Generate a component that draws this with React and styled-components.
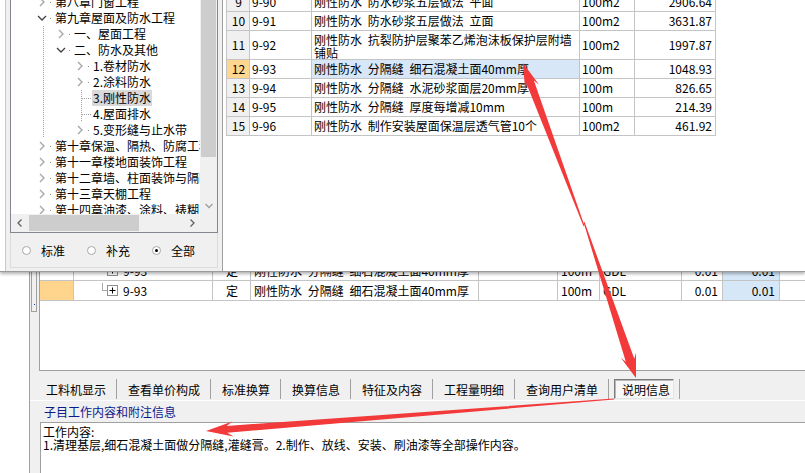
import React from "react";
import styled, { createGlobalStyle } from "styled-components";

const GlobalStyle = createGlobalStyle`
  html, body { margin: 0; padding: 0; background: #fff; }
  body {
    font-family: "Noto Sans CJK SC", "Liberation Sans", sans-serif;
    font-size: 12px;
    color: #000;
  }
`;

const treeItems = [
  { level: 0, label: "第八章门窗工程", state: "closed" },
  { level: 0, label: "第九章屋面及防水工程", state: "open" },
  { level: 1, label: "一、屋面工程", state: "closed", guides: [32] },
  { level: 1, label: "二、防水及其他", state: "open", guides: [32] },
  { level: 2, label: "1.卷材防水", state: "closed", guides: [32] },
  { level: 2, label: "2.涂料防水", state: "closed", guides: [32] },
  { level: 2, label: "3.刚性防水", state: "leaf", selected: true, guides: [32, 70] },
  { level: 2, label: "4.屋面排水", state: "leaf", guides: [32, 70] },
  { level: 2, label: "5.变形缝与止水带", state: "closed", guides: [32] },
  { level: 0, label: "第十章保温、隔热、防腐工程", state: "closed" },
  { level: 0, label: "第十一章楼地面装饰工程", state: "closed" },
  { level: 0, label: "第十二章墙、柱面装饰与隔断、幕墙工程", state: "closed" },
  { level: 0, label: "第十三章天棚工程", state: "closed" },
  { level: 0, label: "第十四章油漆、涂料、裱糊工程", state: "closed" },
];

const quotaRows = [
  { no: 9, code: "9-90", name: "刚性防水 防水砂浆五层做法 平面", unit: "100m2", price: "2906.64" },
  { no: 10, code: "9-91", name: "刚性防水 防水砂浆五层做法 立面", unit: "100m2", price: "3631.87" },
  { no: 11, code: "9-92", name: ["刚性防水 抗裂防护层聚苯乙烯泡沫板保护层附墙", "铺贴"], unit: "100m2", price: "1997.87", tall: true },
  { no: 12, code: "9-93", name: "刚性防水 分隔缝 细石混凝土面40mm厚", unit: "100m", price: "1048.93", current: true },
  { no: 13, code: "9-94", name: "刚性防水 分隔缝 水泥砂浆面层20mm厚", unit: "100m", price: "826.65" },
  { no: 14, code: "9-95", name: "刚性防水 分隔缝 厚度每增减10mm", unit: "100m", price: "214.39" },
  { no: 15, code: "9-96", name: "刚性防水 制作安装屋面保温层透气管10个", unit: "100m2", price: "461.92" },
];

const tabs = ["工料机显示", "查看单价构成", "标准换算", "换算信息", "特征及内容", "工程量明细", "查询用户清单", "说明信息"];

/* ---------- page frame ---------- */

const Screen = styled.div`
  position: relative;
  width: 805px;
  height: 473px;
  overflow: hidden;
  display: flex;
  background: #fff;
  & * { box-sizing: border-box; }
`;

const Gutter = styled.div`
  width: 30px;
  flex: none;
  background: #fff;
  border-right: 1px solid #a0a0a0;
`;

const Main = styled.div`
  flex: 1;
  min-width: 0;
  display: flex;
  flex-direction: column;
  background: #f0f0f0;
`;

const Work = styled.div`
  height: 371px;
  flex: none;
  display: flex;
`;

const Splitter = styled.div`
  width: 9px;
  flex: none;
  padding: 250px 2px 0 1px;
`;

const SplitThumb = styled.div`
  height: 62px;
  border: 1px solid #a0a0a0;
  border-top: none;
  display: flex;
  align-items: flex-end;
  justify-content: center;
  padding-bottom: 6px;
`;

const BlueDot = styled.span`
  width: 1px;
  height: 1px;
  background: #2040c0;
`;

/* ---------- main grid ---------- */

const Grid = styled.div`
  flex: 1;
  min-width: 0;
  background: #fff;
  border-left: 1px solid #a0a0a0;
  border-bottom: 1px solid #a0a0a0;
  padding-top: 261px;
`;

const GRow = styled.div`
  display: grid;
  grid-template-columns: 34px 139px 38px 228px 79px 42px 82px 41px 57px 1fr;
  height: 20px;
`;

const GCell = styled.div`
  display: flex;
  align-items: center;
  justify-content: ${(p) => (p.$align === "right" ? "flex-end" : p.$align === "center" ? "center" : "flex-start")};
  padding: 0 ${(p) => (p.$align === "right" ? "4px" : "2px")} 0 ${(p) => (p.$indent ? p.$indent : 3)}px;
  border-right: ${(p) => (p.$last ? "none" : "1px solid #c4c4c4")};
  border-bottom: 1px solid #c4c4c4;
  background: ${(p) => p.$bg || "#fff"};
  white-space: nowrap;
  overflow: hidden;
  word-spacing: 3px;
`;

const Elbow = styled.span`
  align-self: flex-start;
  margin-top: 2px;
  width: 5px;
  height: 8px;
  flex: none;
  border-left: 1px solid #a8a8a8;
  border-bottom: 1px solid #a8a8a8;
`;

const ExpandBox = styled.span`
  width: 11px;
  height: 11px;
  flex: none;
  border: 1px solid #8f8f8f;
  background: #fff;
  display: flex;
  align-items: center;
  justify-content: center;
  margin-right: 5px;
`;

/* ---------- bottom tabs + detail ---------- */

const TabBar = styled.div`
  height: 29px;
  flex: none;
  display: flex;
  align-items: flex-start;
  padding: 8px 0 0 5px;
`;

const Tab = styled.div`
  height: 20px;
  display: flex;
  align-items: center;
  padding: ${(p) => (p.$active ? "0 5px" : "1px 10px 0 11px")};
  border-right: 1px solid #a0a0a0;
  white-space: nowrap;
`;

const ActiveLabel = styled.span`
  height: 20px;
  display: flex;
  align-items: center;
  padding: 1px 3px 0 7px;
  border: 1px solid;
  border-color: #7a7a7a #e4e4e4 #e4e4e4 #7a7a7a;
  box-shadow: inset 1px 1px 0 #b8b8b8;
  background: #f7f7f7;
`;

const DetailHeader = styled.div`
  height: 22px;
  flex: none;
  border-top: 1px solid #fff;
  display: flex;
  align-items: center;
  padding-left: 14px;
  color: #0a1a8c;
`;

const TextBox = styled.div`
  flex: 1;
  margin-left: 10px;
  background: #fff;
  border-top: 1px solid #a0a0a0;
  border-left: 1px solid #a0a0a0;
  padding: 2px 2px 0 2px;
  line-height: 13px;
`;

/* ---------- popup (quota selector) ---------- */

const Popup = styled.div`
  position: absolute;
  top: 0;
  left: 0;
  z-index: 1;
  width: 805px;
  height: 272px;
  display: flex;
  background: #fff;
  border-bottom: 1px solid #9a9a9a;
  box-shadow: 0 2px 3px rgba(0, 0, 0, 0.3);
`;

const LeftPane = styled.div`
  margin-left: 5px;
  width: 217px;
  flex: none;
  display: flex;
  flex-direction: column;
  background: #f0f0f0;
  border-left: 1px solid #c8c8c8;
  padding: 0 4px 3px;
`;

const TreeBox = styled.div`
  height: 233px;
  flex: none;
  display: grid;
  grid-template-columns: 1fr 17px;
  grid-template-rows: 1fr 18px;
  background: #fff;
  border: 1px solid #828790;
  border-top: none;
`;

const TreeList = styled.div`
  overflow: hidden;
  min-width: 0;
`;

const TreeScroll = styled.div`
  margin-top: -6px;
`;

const guideBg = (xs) =>
  xs.length
    ? xs.map((x) => `linear-gradient(to bottom, #a0a0a0 50%, transparent 50%) ${x}px 0 / 1px 2px repeat-y`).join(", ")
    : "none";

const TreeRow = styled.div`
  height: 16px;
  display: flex;
  align-items: center;
  white-space: nowrap;
  padding-left: ${(p) => 25 + p.$level * 19}px;
  background: ${(p) => guideBg(p.$guides || [])};
`;

const Twisty = styled.span`
  width: 12px;
  height: 16px;
  flex: none;
  display: flex;
  align-items: center;
  justify-content: center;
  background: #fff;
`;

const Conn = styled.span`
  width: 7px;
  height: 16px;
  flex: none;
  background: linear-gradient(#909090, #909090) 2px 8px / 1px 1px no-repeat;
`;

const LeafStub = styled.span`
  width: 19px;
  height: 16px;
  flex: none;
  padding: 0 1px 0 8px;
  background-image: linear-gradient(to right, #a0a0a0 50%, transparent 50%);
  background-size: 2px 1px;
  background-repeat: repeat-x;
  background-position: 0 8px;
  background-origin: content-box;
  background-clip: content-box;
`;

const TreeLabel = styled.span`
  padding: 0 1px;
  margin-left: -1px;
  line-height: 16px;
  background: ${(p) => (p.$selected ? "#d9d9d9" : "transparent")};
`;

const VScroll = styled.div`
  display: flex;
  flex-direction: column;
  background: #f0f0f0;
`;

const VThumb = styled.div`
  height: 157px;
  margin: 0 1px;
  background: #cdcdcd;
`;

const Spacer = styled.div`
  flex: 1;
`;

const ScrollBtn = styled.div`
  width: 17px;
  height: ${(p) => (p.$h ? p.$h : 17)}px;
  flex: none;
  display: flex;
  align-items: center;
  justify-content: center;
`;

const HScroll = styled.div`
  display: flex;
  background: #f0f0f0;
`;

const HThumb = styled.div`
  width: 110px;
  margin: 1px;
  background: #cdcdcd;
`;

const Corner = styled.div`
  background: #f0f0f0;
`;

const RadioRow = styled.div`
  flex: 1;
  display: flex;
  align-items: center;
  padding-left: 11px;
  border: 1px solid #dcdcdc;
  border-top: none;
`;

const Radio = styled.label`
  display: flex;
  align-items: center;
  margin-right: 22px;
`;

const RadioDot = styled.span`
  width: 9px;
  height: 9px;
  border-radius: 50%;
  border: 1px solid #a8a8a8;
  background: #fff;
  margin-right: 10px;
  display: flex;
  align-items: center;
  justify-content: center;
  &::after {
    content: "";
    width: 3px;
    height: 3px;
    border-radius: 50%;
    background: ${(p) => (p.$on ? "#000" : "transparent")};
  }
`;

const RightPane = styled.div`
  flex: 1;
  min-width: 0;
  overflow: hidden;
  background: #fff;
  border-left: 1px solid #a0a0a0;
  padding-left: 3px;
`;

const QuotaTable = styled.div`
  margin-top: -7px;
  width: max-content;
  border-left: 1px solid #c4c4c4;
`;

const QRow = styled.div`
  display: grid;
  grid-template-columns: 23px 62px 268px 55px 81px;
  height: ${(p) => (p.$tall ? 29 : 19)}px;
`;

const QCell = styled.div`
  display: flex;
  align-items: center;
  justify-content: ${(p) => (p.$align === "right" ? "flex-end" : p.$align === "center" ? "center" : "flex-start")};
  padding: 0 ${(p) => (p.$align === "right" ? "3px" : "1px")} 0 2px;
  border-right: 1px solid #c4c4c4;
  border-bottom: 1px solid #c4c4c4;
  background: ${(p) => p.$bg || "#fff"};
  white-space: nowrap;
  overflow: hidden;
  word-spacing: 3px;
  line-height: 12px;
`;

const NameLines = styled.span`
  display: flex;
  flex-direction: column;
  padding-top: 1px;
  line-height: 13px;
`;

/* ---------- annotation arrows ---------- */

const Overlay = styled.svg`
  position: absolute;
  top: 0;
  left: 0;
  z-index: 2;
  pointer-events: none;
`;

function arrow(tail, tip, head, headW, w0, w1) {
  const dx = tip[0] - tail[0];
  const dy = tip[1] - tail[1];
  const len = Math.hypot(dx, dy);
  const ux = dx / len;
  const uy = dy / len;
  const nx = -uy;
  const ny = ux;
  const wing = [tip[0] - ux * head, tip[1] - uy * head];
  const join = [tip[0] - ux * head * 0.78, tip[1] - uy * head * 0.78];
  const pts = [
    [tail[0] + nx * w0, tail[1] + ny * w0],
    [join[0] + nx * w1, join[1] + ny * w1],
    [wing[0] + nx * headW, wing[1] + ny * headW],
    tip,
    [wing[0] - nx * headW, wing[1] - ny * headW],
    [join[0] - nx * w1, join[1] - ny * w1],
    [tail[0] - nx * w0, tail[1] - ny * w0],
  ];
  return pts.map((p) => p.map((v) => v.toFixed(1)).join(",")).join(" ");
}

const Chevron = ({ open }) =>
  open ? (
    <svg width="12" height="12" viewBox="0 0 12 12">
      <path d="M2 4 L6 8 L10 4" fill="none" stroke="#404040" strokeWidth="1.3" />
    </svg>
  ) : (
    <svg width="12" height="12" viewBox="0 0 12 12">
      <path d="M4 2 L8 6 L4 10" fill="none" stroke="#a8a8a8" strokeWidth="1.4" />
    </svg>
  );

const SmallArrow = ({ dir }) => {
  const d = {
    down: "M1.5 3 L5 6.5 L8.5 3",
    left: "M6.5 1.5 L3 5 L6.5 8.5",
    right: "M3.5 1.5 L7 5 L3.5 8.5",
  }[dir];
  return (
    <svg width="10" height="10" viewBox="0 0 10 10">
      <path d={d} fill="none" stroke={dir === "down" ? "#a0a0a0" : "#606060"} strokeWidth="1.3" />
    </svg>
  );
};

const PlusIcon = () => (
  <svg width="9" height="9" viewBox="0 0 9 9">
    <path d="M1.5 4.5H7.5M4.5 1.5V7.5" stroke="#000" strokeWidth="1" />
  </svg>
);

const MainGridRow = ({ marker }) => (
  <GRow>
    <GCell $bg={marker ? "#ffd48c" : "#fff"} />
    <GCell $indent={28}>
      <Elbow />
      <ExpandBox>
        <PlusIcon />
      </ExpandBox>
      9-93
    </GCell>
    <GCell $align="center">定</GCell>
    <GCell>刚性防水 分隔缝 细石混凝土面40mm厚</GCell>
    <GCell />
    <GCell>100m</GCell>
    <GCell>GDL</GCell>
    <GCell $align="right">0.01</GCell>
    <GCell $align="right" $bg="#d6e8f8">0.01</GCell>
    <GCell $last />
  </GRow>
);

export default function App() {
  return (
    <>
      <GlobalStyle />
      <Screen>
        <Gutter />
        <Main>
          <Work>
            <Splitter>
              <SplitThumb>
                <BlueDot />
              </SplitThumb>
            </Splitter>
            <Grid>
              <MainGridRow />
              <MainGridRow marker />
            </Grid>
          </Work>
          <TabBar>
            {tabs.map((t, i) =>
              i === tabs.length - 1 ? (
                <Tab key={t} $active>
                  <ActiveLabel>{t}</ActiveLabel>
                </Tab>
              ) : (
                <Tab key={t}>{t}</Tab>
              )
            )}
          </TabBar>
          <DetailHeader>子目工作内容和附注信息</DetailHeader>
          <TextBox>
            <div>工作内容:</div>
            <div>1.清理基层,细石混凝土面做分隔缝,灌缝膏。2.制作、放线、安装、刷油漆等全部操作内容。</div>
          </TextBox>
        </Main>

        <Popup>
          <LeftPane>
            <TreeBox>
              <TreeList>
                <TreeScroll>
                  {treeItems.map((it) => (
                    <TreeRow key={it.label} $level={it.level} $guides={it.guides}>
                      {it.state === "leaf" ? (
                        <LeafStub />
                      ) : (
                        <>
                          <Twisty>
                            <Chevron open={it.state === "open"} />
                          </Twisty>
                          <Conn />
                        </>
                      )}
                      <TreeLabel $selected={it.selected}>{it.label}</TreeLabel>
                    </TreeRow>
                  ))}
                </TreeScroll>
              </TreeList>
              <VScroll>
                <VThumb />
                <Spacer />
                <ScrollBtn>
                  <SmallArrow dir="down" />
                </ScrollBtn>
              </VScroll>
              <HScroll>
                <ScrollBtn $h={18}>
                  <SmallArrow dir="left" />
                </ScrollBtn>
                <HThumb />
                <Spacer />
                <ScrollBtn $h={18}>
                  <SmallArrow dir="right" />
                </ScrollBtn>
              </HScroll>
              <Corner />
            </TreeBox>
            <RadioRow>
              <Radio>
                <RadioDot />
                标准
              </Radio>
              <Radio>
                <RadioDot />
                补充
              </Radio>
              <Radio>
                <RadioDot $on />
                全部
              </Radio>
            </RadioRow>
          </LeftPane>

          <RightPane>
            <QuotaTable>
              {quotaRows.map((r) => (
                <QRow key={r.no} $tall={r.tall}>
                  <QCell $align="center" $bg={r.current ? "#ffd68f" : "#f0f0f0"}>
                    {r.no}
                  </QCell>
                  <QCell>{r.code}</QCell>
                  <QCell $bg={r.current ? "#d7e7f8" : "#fff"}>
                    {Array.isArray(r.name) ? (
                      <NameLines>
                        {r.name.map((l) => (
                          <span key={l}>{l}</span>
                        ))}
                      </NameLines>
                    ) : (
                      r.name
                    )}
                  </QCell>
                  <QCell>{r.unit}</QCell>
                  <QCell $align="right">{r.price}</QCell>
                </QRow>
              ))}
            </QuotaTable>
          </RightPane>
        </Popup>

        <Overlay width="805" height="473" viewBox="0 0 805 473">
          <polygon points={arrow([584, 226], [523, 63], 26, 7.5, 0.5, 4)} fill="#f23a3a" />
          <polygon points={arrow([584, 222], [636, 378], 24, 8, 0.5, 4.5)} fill="#f23a3a" />
          <polygon points={arrow([614, 399], [206, 431], 27, 7.5, 0.4, 3.5)} fill="#f23a3a" />
        </Overlay>
      </Screen>
    </>
  );
}
